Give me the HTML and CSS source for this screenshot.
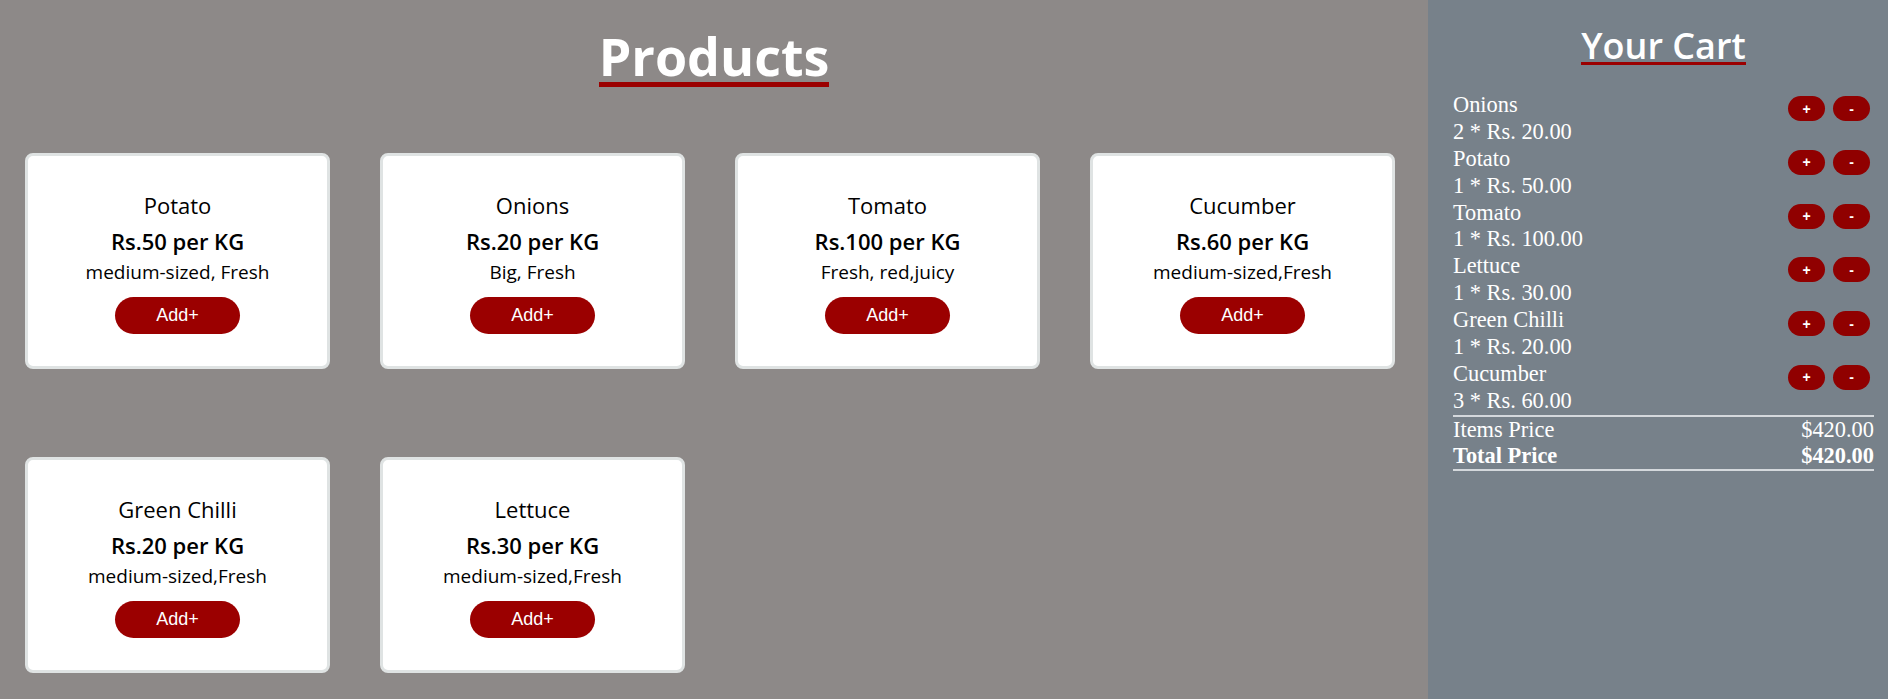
FILE: index.html
```html
<!DOCTYPE html>
<html>
<head>
<meta charset="utf-8">
<title>Shop</title>
<link rel="stylesheet" href="styles.css">
</head>
<body>
<div class="page">
  <section class="products">
    <div class="products-head"><h1 class="title">Products</h1></div>
    <div class="grid">
      <div class="card"><div class="name">Potato</div><div class="price">Rs.50 per KG</div><div class="desc">medium-sized, Fresh</div><button class="add">Add+</button></div>
      <div class="card"><div class="name">Onions</div><div class="price">Rs.20 per KG</div><div class="desc">Big, Fresh</div><button class="add">Add+</button></div>
      <div class="card"><div class="name">Tomato</div><div class="price">Rs.100 per KG</div><div class="desc">Fresh, red,juicy</div><button class="add">Add+</button></div>
      <div class="card"><div class="name">Cucumber</div><div class="price">Rs.60 per KG</div><div class="desc">medium-sized,Fresh</div><button class="add">Add+</button></div>
      <div class="card"><div class="name">Green Chilli</div><div class="price">Rs.20 per KG</div><div class="desc">medium-sized,Fresh</div><button class="add">Add+</button></div>
      <div class="card"><div class="name">Lettuce</div><div class="price">Rs.30 per KG</div><div class="desc">medium-sized,Fresh</div><button class="add">Add+</button></div>
    </div>
  </section>
  <aside class="cart">
    <div class="cart-head"><h2 class="cart-title">Your Cart</h2></div>
    <div class="items">
      <div class="item"><div class="item-text"><div>Onions</div><div>2 * Rs. 20.00</div></div><div class="qty"><button class="q">+</button><button class="q">-</button></div></div>
      <div class="item"><div class="item-text"><div>Potato</div><div>1 * Rs. 50.00</div></div><div class="qty"><button class="q">+</button><button class="q">-</button></div></div>
      <div class="item"><div class="item-text"><div>Tomato</div><div>1 * Rs. 100.00</div></div><div class="qty"><button class="q">+</button><button class="q">-</button></div></div>
      <div class="item"><div class="item-text"><div>Lettuce</div><div>1 * Rs. 30.00</div></div><div class="qty"><button class="q">+</button><button class="q">-</button></div></div>
      <div class="item"><div class="item-text"><div>Green Chilli</div><div>1 * Rs. 20.00</div></div><div class="qty"><button class="q">+</button><button class="q">-</button></div></div>
      <div class="item"><div class="item-text"><div>Cucumber</div><div>3 * Rs. 60.00</div></div><div class="qty"><button class="q">+</button><button class="q">-</button></div></div>
    </div>
    <div class="summary">
      <div class="row"><span>Items Price</span><span>$420.00</span></div>
      <div class="row total"><span>Total Price</span><span>$420.00</span></div>
    </div>
  </aside>
</div>
</body>
</html>
```
FILE: styles.css
```css
html, body {
  margin: 0;
  padding: 0;
}
body {
  font-family: "Open Sans", "Noto Sans", sans-serif;
}
.page {
  display: flex;
  min-height: 699px;
}
.products {
  width: 1428px;
  flex: none;
  background: #8d8988;
}
.products-head {
  text-align: center;
  padding-top: 30px;
}
.title {
  display: inline-block;
  margin: 0;
  font-size: 52px;
  line-height: 1;
  font-weight: 700;
  color: #ffffff;
  border-bottom: 5px solid #9b0000;
}
.grid {
  display: grid;
  grid-template-columns: repeat(4, 305px);
  column-gap: 50px;
  row-gap: 88px;
  margin-top: 66px;
  padding-left: 25px;
  padding-bottom: 26px;
}
.card {
  box-sizing: border-box;
  height: 216px;
  background: #ffffff;
  border: 3px solid #dfe3e3;
  border-radius: 8px;
  display: flex;
  flex-direction: column;
  align-items: center;
  padding-top: 37px;
  color: #000;
}
.name {
  font-size: 22px;
  line-height: 24px;
  font-weight: 500;
}
.price {
  margin-top: 10px;
  font-size: 22px;
  line-height: 28px;
  font-weight: 600;
}
.desc {
  margin-top: 6px;
  font-size: 19px;
  line-height: 22px;
}
.add {
  margin-top: 14px;
  width: 125px;
  height: 37px;
  border: none;
  border-radius: 19px;
  background: #9b0000;
  color: #ffffff;
  font-family: "Liberation Sans", Arial, sans-serif;
  font-size: 18px;
  padding: 0;
}
.cart {
  flex: 1;
  background: #77818a;
  padding: 0 14px 0 25px;
  color: #ffffff;
  font-family: "Liberation Serif", "Times New Roman", serif;
}
.cart-head {
  text-align: center;
  padding-top: 30px;
}
.cart-title {
  display: inline-block;
  margin: 0;
  font-family: "Open Sans", "Noto Sans", sans-serif;
  font-size: 36px;
  line-height: 32px;
  font-weight: 600;
  color: #ffffff;
  border-bottom: 3px solid #9b0000;
}
.items {
  margin-top: 27px;
}
.item {
  display: flex;
  justify-content: space-between;
  align-items: flex-start;
  font-size: 22.4px;
  line-height: 1.2;
}
.qty {
  display: flex;
  gap: 8px;
  margin-top: 4px;
  margin-right: 4px;
}
.q {
  width: 37px;
  height: 25px;
  border: none;
  border-radius: 13px;
  background: #900000;
  color: #ffffff;
  font-family: "Liberation Sans", Arial, sans-serif;
  font-weight: 700;
  font-size: 14px;
  padding: 0;
}
.summary {
  border-top: 2px solid #d4d8dc;
  border-bottom: 2px solid #d4d8dc;
  font-size: 22.4px;
  line-height: normal;
}
.row {
  display: flex;
  justify-content: space-between;
}
.total {
  font-weight: 700;
}
```
